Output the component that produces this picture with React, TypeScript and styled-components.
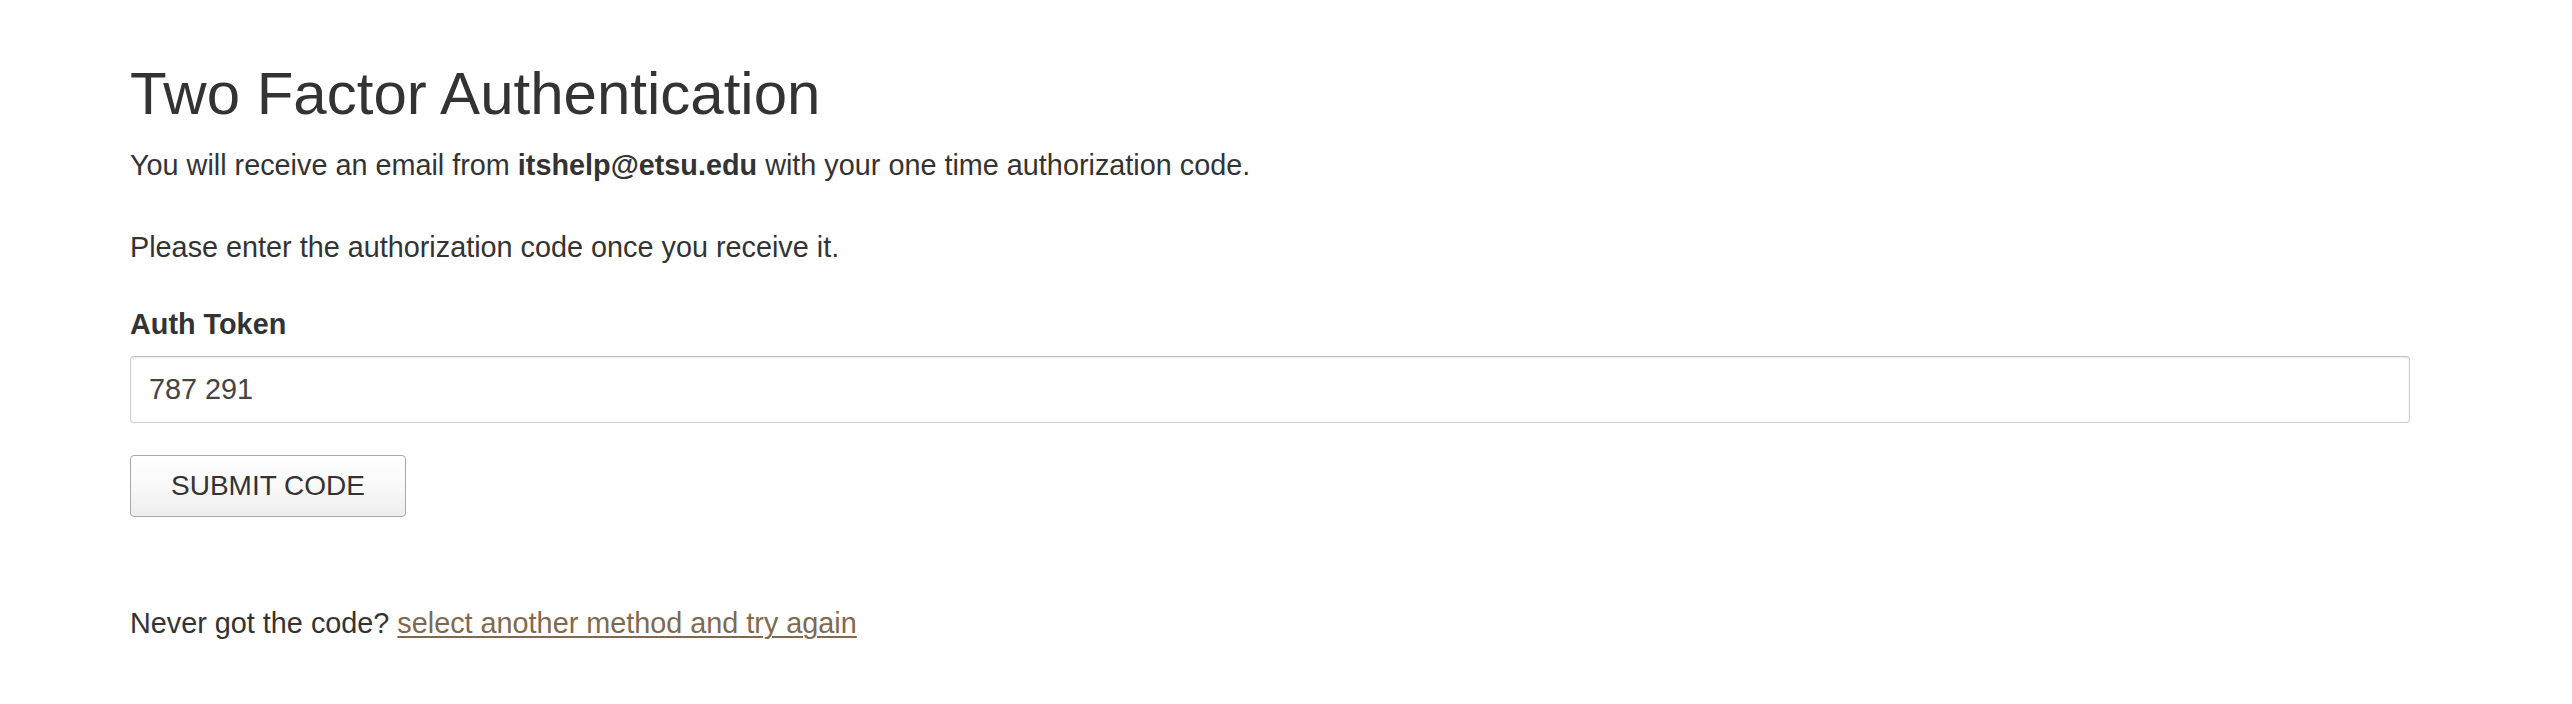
import React from "react";
import styled, { createGlobalStyle } from "styled-components";

const GlobalStyle = createGlobalStyle`
  html, body {
    margin: 0;
    padding: 0;
    background: #ffffff;
  }
  body {
    font-family: "Liberation Sans", Arial, Helvetica, sans-serif;
    color: #333333;
  }
`;

const Page = styled.main`
  box-sizing: border-box;
  width: 100%;
  padding: 61px 162px 60px 130px;
`;

const Title = styled.h1`
  margin: 0 0 18.5px;
  font-size: 60px;
  line-height: 65px;
  font-weight: 400;
  color: #333333;
`;

const Para = styled.p<{ $gap: number }>`
  margin: 0 0 ${(p) => p.$gap}px;
  font-size: 28.8px;
  line-height: 41px;
  color: #333333;
`;

const Strong = styled.strong`
  font-weight: 700;
`;

const Form = styled.form`
  display: flex;
  flex-direction: column;
  align-items: flex-start;
`;

const Label = styled.label`
  display: block;
  margin: 0 0 10.5px;
  font-size: 28.8px;
  line-height: 41px;
  font-weight: 700;
  color: #333333;
`;

const Input = styled.input`
  box-sizing: border-box;
  width: 100%;
  height: 67px;
  margin: 0 0 32px;
  padding: 0 18px;
  border: 1px solid #cccccc;
  border-top-color: #bdbdbd;
  border-radius: 4px;
  box-shadow: inset 0 1px 2px rgba(0, 0, 0, 0.08);
  font-family: "Liberation Sans", Arial, Helvetica, sans-serif;
  font-size: 28.8px;
  color: #444444;
  background: #ffffff;
  outline: none;
`;

const Button = styled.button`
  box-sizing: border-box;
  height: 62px;
  padding: 0 40px;
  border: 1px solid #a8a8a8;
  border-radius: 4px;
  background: linear-gradient(to bottom, #ffffff 0%, #f9f9f9 50%, #ededed 100%);
  font-family: "Liberation Sans", Arial, Helvetica, sans-serif;
  font-size: 28px;
  color: #333333;
  cursor: pointer;
`;

const Footer = styled.p`
  margin: 86.5px 0 0;
  font-size: 28.8px;
  line-height: 41px;
  color: #333333;
`;

const Link = styled.a`
  color: #80694f;
  text-decoration: underline;
  text-decoration-thickness: 2px;
  text-underline-offset: 3px;
`;

export default function App() {
  return (
    <>
      <GlobalStyle />
      <Page>
        <Title>Two Factor Authentication</Title>
        <Para $gap={41.4}>
          You will receive an email from <Strong>itshelp@etsu.edu</Strong> with your one time
          authorization code.
        </Para>
        <Para $gap={36.6}>Please enter the authorization code once you receive it.</Para>
        <Form onSubmit={(e) => e.preventDefault()}>
          <Label htmlFor="authToken">Auth Token</Label>
          <Input id="authToken" type="text" defaultValue="787 291" />
          <Button type="submit">SUBMIT CODE</Button>
        </Form>
        <Footer>
          Never got the code? <Link href="#">select another method and try again</Link>
        </Footer>
      </Page>
    </>
  );
}
